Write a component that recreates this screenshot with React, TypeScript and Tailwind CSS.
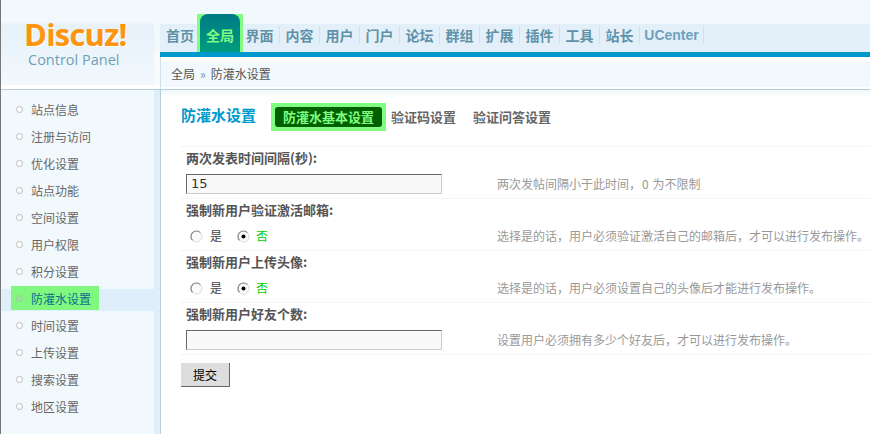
import React from 'react';

const navItems = ['界面', '内容', '用户', '门户', '论坛', '群组', '扩展', '插件', '工具', '站长'];

const menuItems = [
  '站点信息',
  '注册与访问',
  '优化设置',
  '站点功能',
  '空间设置',
  '用户权限',
  '积分设置',
  '防灌水设置',
  '时间设置',
  '上传设置',
  '搜索设置',
  '地区设置',
];

function Radio({ checked }: { checked?: boolean }) {
  return (
    <svg width="13" height="13" viewBox="0 0 13 13" className="shrink-0">
      <circle cx="6.5" cy="6.5" r="5.5" fill="#fafafa" stroke="#e0ddd4" />
      <path d="M2.6 10.4 A5.5 5.5 0 0 1 10.4 2.6" fill="none" stroke="#8a867c" strokeWidth="1.2" />
      {checked && <circle cx="6.5" cy="6.5" r="2" fill="#000" />}
    </svg>
  );
}

function YesNo() {
  return (
    <div className="flex items-center h-full pl-[9px] text-[12px] text-[#444]">
      <Radio />
      <span className="ml-[7px] w-[27px]">是</span>
      <Radio checked />
      <span className="ml-[6px] text-[#00cc00]">否</span>
    </div>
  );
}

function TextBox({ value }: { value?: string }) {
  return (
    <div className="ml-[5px] w-[256px] h-[20px] bg-[#f9f9f9] border border-t-[#666] border-l-[#666] border-r-[#ccc] border-b-[#ccc] pl-[4px] leading-[18px] text-[13px] text-[#333] font-['DejaVu_Sans',sans-serif]">
      {value}
    </div>
  );
}

function Row({ label, tip, children }: { label: string; tip: React.ReactNode; children: React.ReactNode }) {
  return (
    <div className="h-[52px] border-b border-dotted border-[#deeffb]">
      <div className="h-[24px] pl-[5px] pt-[2px] leading-[18px] font-bold text-[13px] text-[#555]">{label}</div>
      <div className="flex items-center h-[26px]">
        <div className="w-[316px] h-[20px] flex items-center">{children}</div>
        <div className="text-[12px] text-[#999] whitespace-nowrap">{tip}</div>
      </div>
    </div>
  );
}

export default function App() {
  return (
    <div className="w-[870px] h-[434px] overflow-hidden bg-white border-l border-[#777] flex flex-col font-['Noto_Sans_CJK_SC',sans-serif]">
      {/* header */}
      <div className="h-[90px] shrink-0 flex border-b border-[#b5cfd9]">
        <div className="w-[153px] h-[85px] bg-gradient-to-b from-[#f2f9fd] from-25% via-[#e6f1fa] via-30% to-[#f2f9fd] flex flex-col items-start pl-[23px] pt-[16px]">
          <div className="h-[36px] leading-[36px] text-[31px] font-bold text-[#ff9410] tracking-[-0.8px] font-['Open_Sans',sans-serif] [text-shadow:1px_1px_0_#fff]">
            Discuz!
          </div>
          <div className="pl-[4px] leading-[16px] text-[14.5px] text-[#6f9fb5] font-['Open_Sans',sans-serif]">Control Panel</div>
        </div>
        <div className="w-[6px] h-[85px] flex flex-col">
          <div className="h-[52px] bg-[#f2f9fd]" />
          <div className="flex-1 bg-[#f8fbfc]" />
        </div>
        <div className="flex-1 flex flex-col">
          <div className="h-[24px] bg-[#f2f9fd]" />
          <div className="h-[28px] bg-[#e3eff9] flex items-end">
            <div className="w-[40px] h-[28px] leading-[23px] text-center text-[14px] font-semibold text-[#5f92a8]">首页</div>
            <div className="w-[46px] h-[38px] -mx-[3px] bg-[#80fc80] px-[3px] relative shrink-0">
              <div className="h-full rounded-t-[8px] bg-gradient-to-b from-[#007a84] to-[#009c7e] pt-[9px] leading-[24px] text-center text-[14px] font-semibold text-[#80fc80]">
                全局
              </div>
            </div>
            {navItems.map(item => (
              <div
                key={item}
                className="w-[40px] h-[18px] mb-[8px] leading-[18px] text-center text-[14px] font-semibold text-[#5f92a8] border-r border-[#d3e1ea]"
              >
                {item}
              </div>
            ))}
            <div className="w-[64px] h-[18px] mb-[8px] leading-[18px] text-center text-[14px] font-bold text-[#6fa0bb] border-r border-[#d3e1ea] font-['Liberation_Sans',sans-serif]">
              UCenter
            </div>
          </div>
          <div className="h-[5px] bg-[#0099cc]" />
          <div className="flex-1 flex border-l border-[#cfe0e8]">
            <div className="flex-1 flex flex-col pt-[5px]">
              <div className="h-[25px] bg-[#f2f9fd] pl-[10px] leading-[24px] text-[12px] text-[#555]">
                全局<span className="mx-[5px] text-[#6f8fa8]">»</span>防灌水设置
              </div>
            </div>
          </div>
        </div>
      </div>

      {/* body */}
      <div className="flex-1 flex min-h-0">
        <div className="w-[153px] bg-[#f2f9fd] pt-[6px]">
          {menuItems.map((item, i) =>
            i === 7 ? (
              <div key={item} className="flex items-start h-[22px] mt-[4px] mb-[1px] bg-[#deeefa]">
                <div className="w-[88px] h-[24px] ml-[10px] -mt-[3px] pl-[5px] pt-[1px] bg-[#80f880] flex items-center text-[12px] text-[#0a6e90]">
                  <span className="w-[7px] h-[7px] rounded-full border border-[#a5c8a5] bg-[#90e890] mr-[8px]" />
                  {item}
                </div>
              </div>
            ) : (
              <div key={item} className="h-[27px] pl-[15px] flex items-center text-[12px] text-[#666]">
                <span className="w-[7px] h-[7px] rounded-full border border-[#bbb] bg-white mr-[8px]" />
                {item}
              </div>
            ),
          )}
        </div>
        <div className="w-[6px] bg-[#deeefa]" />
        <div className="flex-1 border-l border-[#b5cfd9] bg-gradient-to-b from-[#f2f7fa] to-white to-[8px] bg-no-repeat pl-[20px]">
          <div className="flex items-center h-[28px] mt-[13px] mb-[15px]">
            <div className="w-[90px] -mt-[4px] text-[15px] font-bold text-[#0099cc]">防灌水设置</div>
            <div className="bg-[#80fc80] p-[4px] w-[115px] h-[28px]">
              <div className="h-[20px] rounded-[3px] bg-[#006000] leading-[20px] text-center text-[13px] font-bold text-[#80fc80]">
                防灌水基本设置
              </div>
            </div>
            <div className="ml-[5px] w-[82px] text-[13px] font-bold text-[#666]">验证码设置</div>
            <div className="text-[13px] font-bold text-[#666]">验证问答设置</div>
          </div>
          <div className="border-t border-dotted border-[#deeffb]">
            <Row
              label="两次发表时间间隔(秒):"
              tip={
                <>
                  两次发帖间隔小于此时间，<span className="mx-[1px]">0</span> 为不限制
                </>
              }
            >
              <TextBox value="15" />
            </Row>
            <Row label="强制新用户验证激活邮箱:" tip="选择是的话，用户必须验证激活自己的邮箱后，才可以进行发布操作。">
              <YesNo />
            </Row>
            <Row label="强制新用户上传头像:" tip="选择是的话，用户必须设置自己的头像后才能进行发布操作。">
              <YesNo />
            </Row>
            <Row label="强制新用户好友个数:" tip="设置用户必须拥有多少个好友后，才可以进行发布操作。">
              <TextBox />
            </Row>
          </div>
          <button className="mt-[8px] w-[49px] h-[24px] bg-[#ddd] border-r border-b border-[#666] text-[12px] text-black">提交</button>
        </div>
      </div>
    </div>
  );
}
